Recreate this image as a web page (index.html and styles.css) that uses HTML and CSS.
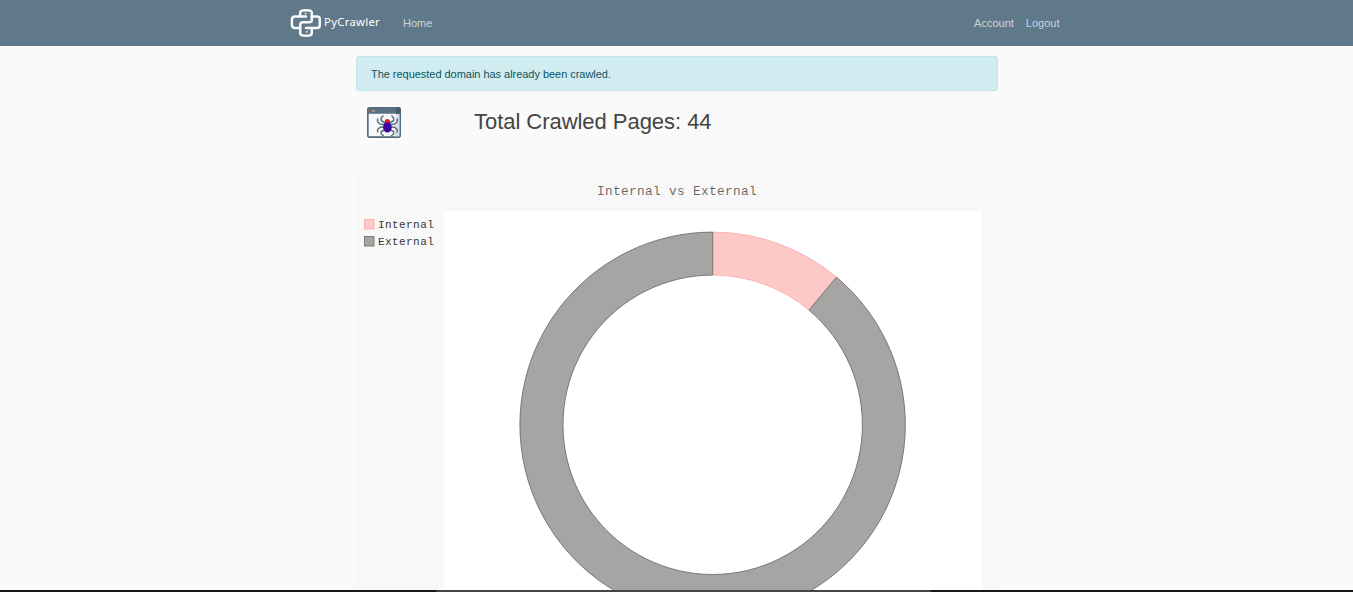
FILE: index.html
```html
<!DOCTYPE html>
<html lang="en">
<head>
<meta charset="utf-8">
<title>PyCrawler</title>
<link rel="stylesheet" href="styles.css">
</head>
<body>
<header class="navbar">
  <div class="nav-inner">
    <a class="brand" href="#">
      <svg class="brand-mark" viewBox="0 0 32 30" fill="none" stroke="#f7f9fa" stroke-width="2.5" stroke-linejoin="round" stroke-linecap="round">
        <path d="M10.2 8.6V4.4Q10.2 2.2 16 2.2T21.8 4.4V8.6H27Q29.8 8.6 29.8 11V17Q29.8 20 27 20H21.8V25.2Q21.8 27.8 16 27.8T10.2 25.2V20H5Q1.9 20 1.9 16.5V12Q1.9 8.6 5 8.6H16"/>
        <path d="M21.8 8.6V12Q21.8 14.3 19 14.3H13Q10.2 14.3 10.2 17V20M16 20H21.8"/>
        <circle cx="15.6" cy="5.6" r=".9" fill="#f7f9fa" stroke="none"/>
        <circle cx="16.8" cy="23.8" r=".9" fill="#f7f9fa" stroke="none"/>
      </svg>
      <span class="brand-name">PyCrawler</span>
    </a>
    <nav class="links"><a href="#">Home</a></nav>
    <nav class="links links-end"><a href="#">Account</a><a href="#">Logout</a></nav>
  </div>
</header>
<main class="content">
  <div class="alert">The requested domain has already been crawled.</div>
  <section class="summary">
    <svg class="spider" viewBox="0 0 34 31">
      <rect x=".8" y=".8" width="32.4" height="29.4" rx="1.8" fill="#f7f9fa" stroke="#506878" stroke-width="1.7"/>
      <path d="M29 7H32.3V29.3H27.5Z" fill="#d5dde3"/>
      <path d="M.5 6.8V2Q.5.5 2 .5H32Q33.5.5 33.5 2V6.8Z" fill="#587080"/>
      <path d="M29 .5H32Q33.5.5 33.5 2V6.8H29Z" fill="#465d6d"/>
      <path d="M3.2 4h1.5" stroke="#e34545" stroke-width="1.3"/>
      <path d="M5.5 4h1.5" stroke="#e8df4b" stroke-width="1.3"/>
      <path d="M8.2 4h1.5" stroke="#4daf65" stroke-width="1.3"/>
      <g fill="none" stroke="#567282" stroke-width="1.5" stroke-linejoin="round">
        <path d="M18.2 16L14.2 13.5V11L16.3 8.6M17.3 17.8L13 17L10.6 14.8V11.5M17.3 20L13.2 20.2L10.6 22.5V25.5M17.8 22.8L14.2 24.5V27L16.8 29"/>
        <path d="M22.6 16L26.6 13.5V11L24.5 8.6M23.5 17.8L27.8 17L30.2 14.8V11.5M23.5 20L27.6 20.2L30.2 22.5V25.5M23 22.8L26.6 24.5V27L24 29"/>
      </g>
      <ellipse cx="20.4" cy="14.5" rx="2.7" ry="2.6" fill="#f21825"/>
      <ellipse cx="20.4" cy="20.2" rx="4.3" ry="5.2" fill="#42009c"/>
    </svg>
    <h1 class="total">Total Crawled Pages: 44</h1>
  </section>
  <svg class="chart" viewBox="356 174 642 418">
    <rect class="chart-bg" x="356" y="174" width="642" height="482"/>
    <rect class="plot-bg" x="444" y="211" width="537.5" height="430"/>
    <text class="chart-title" x="677" y="195" text-anchor="middle">Internal vs External</text>
    <rect class="internal" x="364.5" y="219.5" width="9.5" height="9.5"/>
    <text class="legend" x="378" y="228">Internal</text>
    <rect class="external" x="364.5" y="236.5" width="9.5" height="9.5"/>
    <text class="legend" x="378" y="245">External</text>
    <path class="internal" d="M712.7 232.1A192.7 192.7 0 0 1 836.5 277.2L808.9 310.1A149.7 149.7 0 0 0 712.7 275.1Z"/>
    <path class="external" d="M836.5 277.2A192.7 192.7 0 1 1 712.7 232.1V275.1A149.7 149.7 0 1 0 808.9 310.1Z"/>
  </svg>
</main>
<footer class="dock"><div class="dock-active"></div></footer>
</body>
</html>
```
FILE: styles.css
```css
* { box-sizing: border-box; }
body {
  margin: 0;
  height: 592px;
  overflow: hidden;
  background: #fafafa;
  color: #444;
  font: 11px/16.5px "Liberation Sans", Arial, sans-serif;
}
.navbar { height: 46px; background: #5f788a; }
.nav-inner {
  width: 773px;
  height: 46px;
  margin: 0 auto;
  display: flex;
  align-items: center;
}
.brand { display: flex; align-items: center; width: 113px; color: #fff; text-decoration: none; }
.brand-mark { width: 32px; height: 30px; flex: none; }
.brand-name { font: 11.3px/16px "Noto Sans", sans-serif; letter-spacing: .3px; margin: -2px 0 0 2px; }
.links { display: flex; gap: 12px; }
.links a { color: #cbd5db; text-decoration: none; }
.links-end { margin-left: auto; padding-right: 3.5px; }
.content { width: 642px; margin: 10px 0 0 356px; }
.alert {
  height: 35px;
  padding: 9px 14px;
  background: #d1ecf1;
  border: 1px solid #bee5eb;
  border-radius: 3px;
  color: #0c5460;
  letter-spacing: -.035px;
}
.summary { height: 83px; padding: 16px 0 0 11px; display: flex; align-items: flex-start; }
.spider { width: 34px; height: 31px; flex: none; }
.total { margin: 1px 0 0 73px; font-size: 22px; line-height: 27px; font-weight: 400; letter-spacing: -.04px; color: #444; }
.chart { display: block; width: 642px; height: 418px; }
.chart-bg { fill: #f8f8f8; }
.plot-bg { fill: #fff; }
.chart-title { font: 12.8px "Liberation Mono", monospace; letter-spacing: .32px; fill: rgba(0, 0, 0, .6); }
.legend { font: 11px "Liberation Mono", monospace; letter-spacing: .42px; fill: #353535; }
.internal { fill: #fdc9c7; stroke: #fbb0af; stroke-width: .9; }
.external { fill: #a6a5a3; stroke: #716e6d; stroke-width: .9; }
.dock { position: absolute; left: 0; right: 0; top: 590px; height: 2px; background: #17181c; }
.dock-active { width: 495px; height: 2px; margin-left: 436px; background: #454541; border-radius: 2px 2px 0 0; }
```
